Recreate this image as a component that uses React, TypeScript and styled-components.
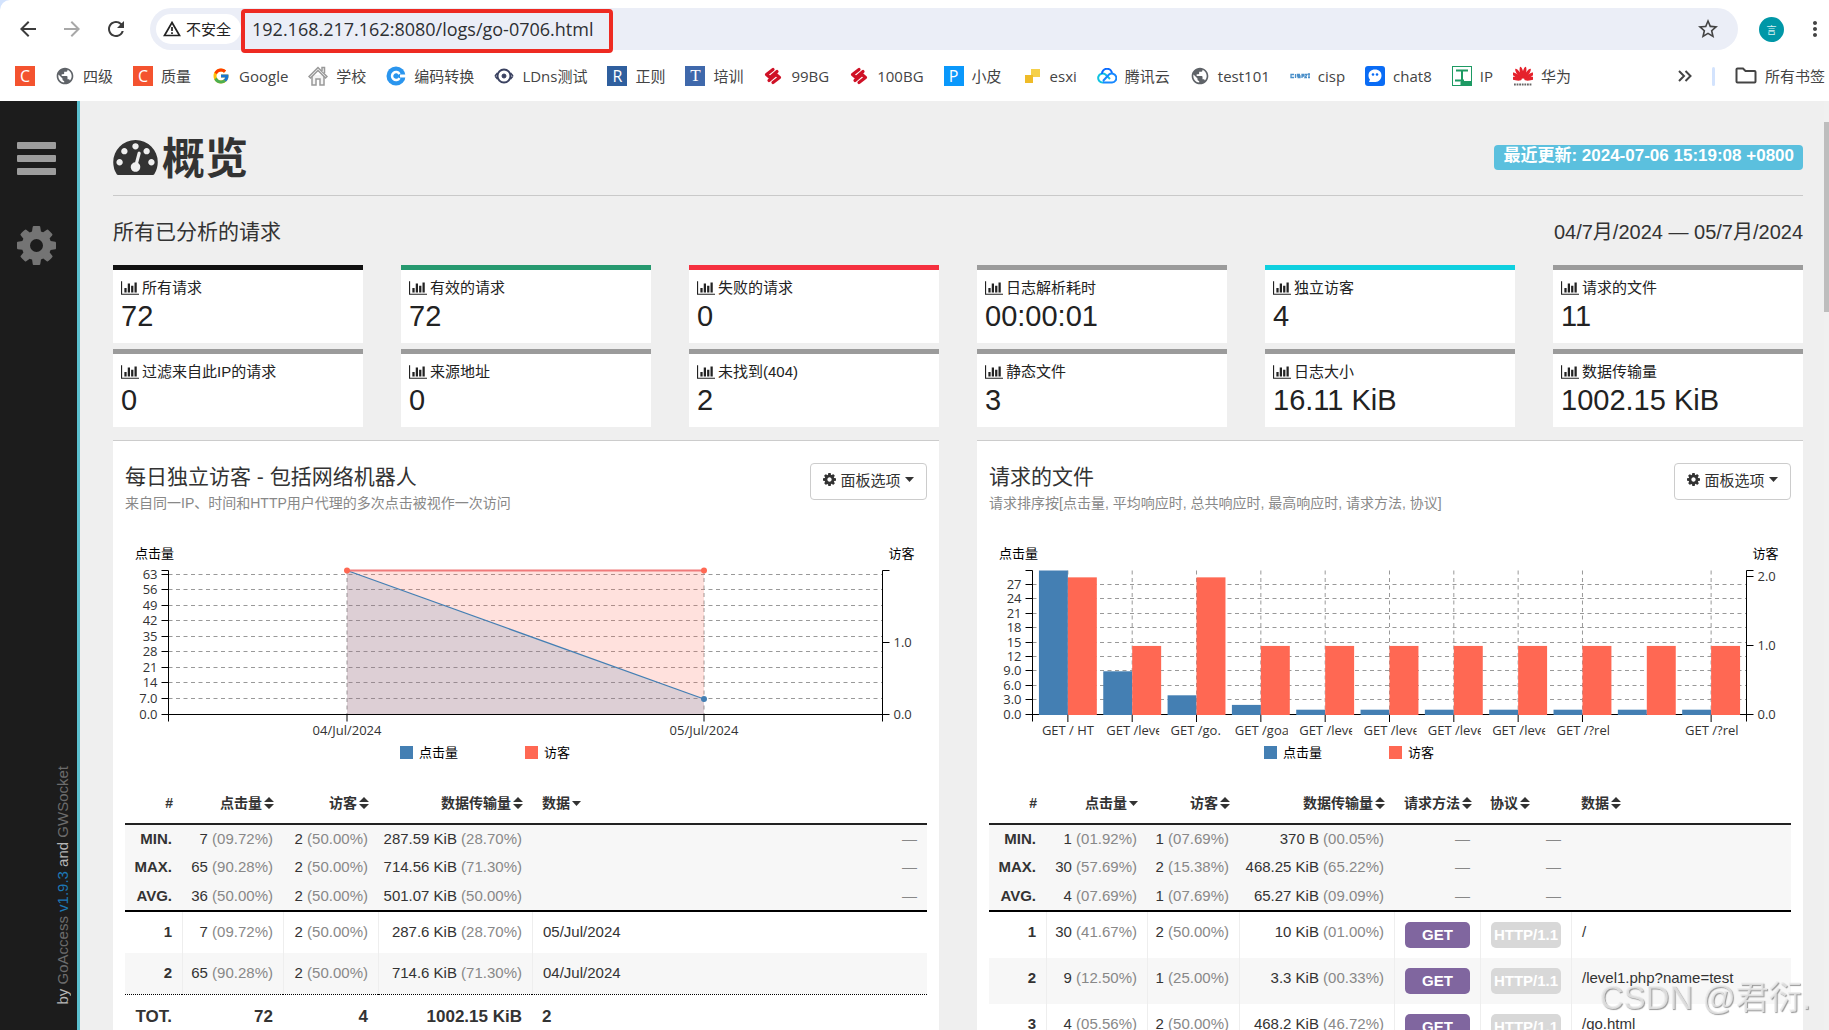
import React, { useEffect, useRef, useState } from "react";
import styled, { createGlobalStyle, css } from "styled-components";
import { FcGoogle } from "react-icons/fc";
import { MdArrowBack, MdArrowForward, MdRefresh, MdStarOutline, MdMoreVert, MdPublic } from "react-icons/md";

const sans = `"Liberation Sans", "Noto Sans CJK SC", sans-serif`;
const ui = `"Open Sans", "Noto Sans CJK SC", sans-serif`;

const GlobalStyle = createGlobalStyle`
  * { box-sizing: border-box; }
  body { margin: 0; background: #fff; font-family: ${sans}; color: #222; }
  button { font: inherit; color: inherit; background: none; border: 0; padding: 0; cursor: pointer; }
  a { color: inherit; text-decoration: none; }
  h1, h2, h3, p { margin: 0; font-weight: 400; }
  svg { display: block; flex: none; }
`;

/* ---------- glyphs ---------- */

const COG =
  "M1152 896q0-106-75-181t-181-75-181 75-75 181 75 181 181 75 181-75 75-181zm512-109v222q0 12-8 23t-20 13l-185 28q-19 54-39 91 35 50 107 138 10 12 10 25t-9 23q-27 37-99 108t-94 71q-12 0-26-9l-138-108q-44 23-91 38-16 136-29 186-7 28-36 28h-222q-14 0-24.5-8.5t-11.5-21.5l-28-184q-49-16-90-37l-141 107q-10 9-25 9-14 0-25-11-126-114-165-168-7-10-7-23 0-12 8-23 15-21 51-66.5t54-70.5q-27-50-41-99l-183-27q-13-2-21-12.5t-8-23.5v-222q0-12 8-23t19-13l186-28q14-46 39-92-40-57-107-138-10-12-10-24 0-10 9-23 26-36 98.5-107.5t94.5-71.5q13 0 26 10l138 107q44-23 91-38 16-136 29-186 7-28 36-28h222q14 0 24.5 8.5t11.5 21.5l28 184q49 16 90 37l142-107q9-9 24-9 13 0 25 10 129 119 165 170 7 8 7 22 0 12-8 23-15 21-51 66.5t-54 70.5q26 50 41 98l183 28q13 2 21 12.5t8 23.5z";
const GAUGE =
  "M384 1152q0-53-37.5-90.5t-90.5-37.5-90.5 37.5-37.5 90.5 37.5 90.5 90.5 37.5 90.5-37.5 37.5-90.5zm192-448q0-53-37.5-90.5t-90.5-37.5-90.5 37.5-37.5 90.5 37.5 90.5 90.5 37.5 90.5-37.5 37.5-90.5zm428 481l101-382q6-26-7.5-48.5t-38.5-29.5-48 6.5-30 39.5l-101 382q-60 5-107 43.5t-63 98.5q-20 77 20 146t117 89 146-20 89-117q16-60-6-117t-72-91zm660-33q0-53-37.5-90.5t-90.5-37.5-90.5 37.5-37.5 90.5 37.5 90.5 90.5 37.5 90.5-37.5 37.5-90.5zm-640-640q0-53-37.5-90.5t-90.5-37.5-90.5 37.5-37.5 90.5 37.5 90.5 90.5 37.5 90.5-37.5 37.5-90.5zm448 192q0-53-37.5-90.5t-90.5-37.5-90.5 37.5-37.5 90.5 37.5 90.5 90.5 37.5 90.5-37.5 37.5-90.5zm320 448q0 261-141 483-19 29-54 29h-1402q-35 0-54-29-141-221-141-483 0-182 71-348t191-286 286-191 348-71 348 71 286 191 191 286 71 348z";
const CHART =
  "M640 896v512h-256v-512h256zm384-512v1024h-256v-1024h256zm1024 1152v128h-2048v-1536h128v1408h1920zm-640-896v768h-256v-768h256zm384-384v1152h-256v-1152h256z";

const CogIcon = ({ size }: { size: number }) => (
  <svg width={size} height={size} viewBox="128 128 1536 1536" fill="currentColor"><path d={COG} /></svg>
);
const GaugeIcon = () => (
  <svg width="45" height="35" viewBox="0 256 1792 1408" fill="currentColor"><path d={GAUGE} /></svg>
);
const ChartIcon = () => (
  <svg width="18" height="14" viewBox="0 128 2048 1536" fill="currentColor"><path d={CHART} /></svg>
);
const BarsIcon = () => (
  <svg width="39" height="33" viewBox="0 0 39 33" fill="currentColor">
    <rect width="39" height="7" rx="1" /><rect y="13" width="39" height="7" rx="1" /><rect y="26" width="39" height="7" rx="1" />
  </svg>
);
const SortIcon = () => (
  <svg width="10" height="12" viewBox="0 0 10 12" fill="currentColor"><path d="M5 0l5 5H0zM0 7h10l-5 5z" /></svg>
);
const CaretIcon = () => (
  <svg width="9" height="5" viewBox="0 0 9 5" fill="currentColor"><path d="M0 0h9L4.500 5z" /></svg>
);

/* ---------- browser chrome ---------- */

const Window = styled.div`
  height: 100vh;
  display: flex;
  flex-direction: column;
  overflow: hidden;
  background: #d3e3fd;
`;
const Toolbar = styled.header`
  display: flex;
  align-items: center;
  height: 58px;
  padding: 0 2px 0 16px;
  background: #fff;
  border-top-left-radius: 10px;
`;
const NavButton = styled.button<{ $dim?: boolean }>`
  width: 24px;
  height: 24px;
  margin-right: 20px;
  color: ${(p) => (p.$dim ? "#a8a8a8" : "#3c3c3c")};
`;
const Omnibox = styled.div`
  flex: 1;
  display: flex;
  align-items: center;
  height: 42px;
  margin-left: 2px;
  padding: 0 18px 0 6px;
  border-radius: 21px;
  background: #ebeef7;
`;
const SecurityChip = styled.button`
  display: flex;
  align-items: center;
  gap: 5px;
  width: 85px;
  height: 30px;
  padding-left: 7px;
  border-radius: 15px;
  background: #fff;
  color: #222;
  font: 15px/30px ${ui};
  white-space: nowrap;
`;
const UrlBox = styled.label`
  position: relative;
  width: 372px;
  &::after {
    content: "";
    position: absolute;
    inset: 0 0 -4px;
    border: 4px solid #ee2a22;
    border-radius: 4px;
    pointer-events: none;
  }
`;
const UrlInput = styled.input`
  display: block;
  width: 100%;
  height: 40px;
  padding: 0 0 0 11px;
  border: 0;
  outline: 0;
  background: none;
  color: #2e3033;
  font: 18px ${ui};
`;
const StarButton = styled.button`
  margin-left: auto;
  color: #444;
`;
const Avatar = styled.button`
  width: 25px;
  height: 25px;
  margin: 0 19px 0 21px;
  border-radius: 50%;
  background: #0097a7;
  color: #d8f2f4;
  font-size: 10px;
`;
const MenuButton = styled.button`
  color: #444;
`;
const Bookmarks = styled.nav`
  display: flex;
  align-items: center;
  gap: 20px;
  height: 43px;
  padding: 0 4px 7px 15px;
  background: #fff;
  font: 15px/22px ${ui};
  color: #444;
  white-space: nowrap;
`;
const Bookmark = styled.a`
  display: flex;
  align-items: center;
  gap: 8px;
`;
const IconSlot = styled.span`
  display: flex;
  justify-content: center;
  width: 20px;
`;
const Tile = styled.span<{ $bg: string; $serif?: boolean }>`
  width: 20px;
  height: 20px;
  background: ${(p) => p.$bg};
  color: #fff;
  text-align: center;
  font: ${(p) => (p.$serif ? `17px/20px "Liberation Serif", serif` : `16px/20px ${ui}`)};
`;
const MoreMarks = styled.button`
  margin-left: auto;
`;
const Divider = styled.span`
  width: 3px;
  height: 19px;
  border-radius: 2px;
  background: #d3e3fd;
`;

const WarnIcon = () => (
  <svg width="18" height="16" viewBox="0 0 18 16" fill="none" stroke="#222" strokeWidth="1.700">
    <path d="M9 1.500L16.500 14.500H1.500z" /><path d="M9 6v4M9 11.300v1.700" />
  </svg>
);
const House = () => (
  <svg width="20" height="20" viewBox="0 0 20 20" fill="#f4f4f4" stroke="#999" strokeWidth="1.500">
    <path d="M4 9v10h4v-6h4v6h4V9" /><path d="M1 10.500L10 1.500l9 9-1.500 1.500L10 4.500 2.500 12z" /><path d="M14 5V1.500h2.500V7" />
  </svg>
);
const BlueC = () => (
  <svg width="20" height="20" viewBox="0 0 20 20">
    <circle cx="10" cy="10" r="9.500" fill="#2a95ee" /><path d="M13.500 8a4 4 0 1 0 0 4" fill="none" stroke="#fff" strokeWidth="2.500" /><path d="M14 8.500h6v3h-6z" fill="#fff" />
  </svg>
);
const Eye = () => (
  <svg width="20" height="18" viewBox="0 0 20 18" fill="none" stroke="#3a4160">
    <circle cx="10" cy="9" r="6.500" strokeWidth="2" /><path d="M1 9l2.500-3M1 9l2.500 3M19 9l-2.500-3M19 9l-2.500 3" strokeWidth="1.500" /><circle cx="10" cy="9" r="2" fill="#3a4160" />
  </svg>
);
const RedS = () => (
  <svg width="18" height="18" viewBox="0 0 18 18" fill="none" stroke="#cf1126" strokeWidth="3.200" strokeLinecap="round" strokeLinejoin="round">
    <path d="M9 2.500L2.500 7.500 6 10.500l7-6" /><path d="M9 15.500l6.500-5L12 7.500l-7 6" />
  </svg>
);
const Blocks = () => (
  <svg width="16" height="14" viewBox="0 0 16 14"><path d="M7 0h9v8H7z" fill="#f5d04a" /><path d="M1 6h8v8H1z" fill="#efbb28" /></svg>
);
const Cloud = () => (
  <svg width="20" height="16" viewBox="0 0 20 16" fill="none" strokeWidth="2">
    <path d="M6 14.500a4.500 4.500 0 1 1 2.500-8L13 11" stroke="#10c3e0" /><path d="M5 6a5 5 0 0 1 10-.500" stroke="#0a6cff" /><path d="M6 14.500h9a4.500 4.500 0 1 0-3-8L6 13" stroke="#1788ff" />
  </svg>
);
const CispMark = () => (
  <svg width="20" height="6" viewBox="0 0 20 6" stroke="#4a8fc9" fill="none" strokeWidth="1.300">
    <path d="M4 1.500H1v3h3M5.500 1v4M10 1.500H7.500v1.500H10v1.500H7.500M12 5V1.500h2V3h-2M15 1.500h2L15 4.500h2M18 1h2M19 1v4M18 4.500h2" />
  </svg>
);
const ChatMark = () => (
  <svg width="20" height="20" viewBox="0 0 20 20">
    <rect width="20" height="20" rx="3" fill="#0a6cf5" /><path d="M10 3.500c4 0 6.500 2.500 6.500 6s-2.500 6.500-6 6.500H4l1-2.500c-1-1-1.500-2.500-1.500-4 0-3.500 2.500-6 6.500-6z" fill="#fff" />
    <circle cx="8" cy="8.500" r="1.300" fill="#0a6cf5" /><circle cx="12" cy="8.500" r="1.300" fill="#0a6cf5" />
  </svg>
);
const ToolMark = () => (
  <svg width="20" height="20" viewBox="0 0 20 20" fill="none" stroke="#1d9a63">
    <rect x=".5" y=".5" width="19" height="19" /><path d="M4 4.500h12M10 4.500v10M3 14.500h9" strokeWidth="2" /><path d="M9 15.500h11v4H9z" fill="#1d9a63" />
  </svg>
);
const Huawei = () => (
  <svg width="20" height="20" viewBox="0 0 20 20">
    {[-80, -57, -34, -11, 11, 34, 57, 80].map((a) => (
      <ellipse key={a} cx="10" cy="6.500" rx="1.700" ry="6" fill="#e5222c" transform={`rotate(${a} 10 14)`} />
    ))}
    <path d="M1 18.500h18" stroke="#666" strokeWidth="2" strokeDasharray="1.800 .8" />
  </svg>
);
const Folder = () => (
  <svg width="22" height="18" viewBox="0 0 22 18" fill="none" stroke="#444" strokeWidth="2">
    <path d="M1.500 14.500v-12a1 1 0 0 1 1-1H8l2.500 2.500h9a1 1 0 0 1 1 1v9.500a1 1 0 0 1-1 1h-17a1 1 0 0 1-1-1z" />
  </svg>
);
const Chevrons = () => (
  <svg width="14" height="12" viewBox="0 0 14 12" fill="none" stroke="#444" strokeWidth="2"><path d="M1 1l5 5-5 5M7.500 1l5 5-5 5" /></svg>
);

const marks: [React.ReactNode, string][] = [
  [<Tile $bg="#f4532f">C</Tile>, ""],
  [<MdPublic size={20} color="#5f6368" />, "四级"],
  [<Tile $bg="#f4532f">C</Tile>, "质量"],
  [<FcGoogle size={18} />, "Google"],
  [<House />, "学校"],
  [<BlueC />, "编码转换"],
  [<Eye />, "LDns测试"],
  [<Tile $bg="#2f5f9e">R</Tile>, "正则"],
  [<Tile $bg="#3f68ab" $serif>T</Tile>, "培训"],
  [<RedS />, "99BG"],
  [<RedS />, "100BG"],
  [<Tile $bg="#0a98fb">P</Tile>, "小皮"],
  [<Blocks />, "esxi"],
  [<Cloud />, "腾讯云"],
  [<MdPublic size={20} color="#5f6368" />, "test101"],
  [<CispMark />, "cisp"],
  [<ChatMark />, "chat8"],
  [<ToolMark />, "IP"],
  [<Huawei />, "华为"],
];

/* ---------- report layout ---------- */

const Page = styled.div`
  flex: 1;
  min-height: 0;
  display: flex;
  background: #efefef;
`;
const Sidebar = styled.nav`
  display: flex;
  flex-direction: column;
  align-items: center;
  flex: none;
  width: 80px;
  padding: 41px 5px 26px 0;
  border-right: 3px solid #5bc0cf;
  background: #1c1c1c;
  color: #999;
`;
const SideButton = styled.button<{ $dim?: boolean }>`
  height: 33px;
  margin-bottom: 51px;
  color: ${(p) => (p.$dim ? "#747474" : "#9d9d9d")};
`;
const Credit = styled.p`
  margin-top: auto;
  align-self: flex-end;
  writing-mode: vertical-rl;
  transform: rotate(180deg);
  font-size: 15px;
  line-height: 18px;
  color: #b5b5b5;
  white-space: nowrap;
`;
const CreditLink = styled.a<{ $accent?: boolean }>`
  color: ${(p) => (p.$accent ? "#1c78b6" : "#6c6c6c")};
`;
const Main = styled.main`
  flex: 1;
  min-width: 0;
  padding: 0 21px 0 33px;
  overflow: hidden;
`;
const Rail = styled.div`
  flex: none;
  width: 5px;
  padding-top: 21px;
  background: #f0f0f0;
  &::before {
    content: "";
    display: block;
    height: 190px;
    background: #bdbdbd;
  }
`;
const TitleRow = styled.div`
  display: flex;
  justify-content: space-between;
  align-items: center;
  height: 95px;
  padding-top: 19px;
  border-bottom: 1px solid #c9c9c9;
`;
const Title = styled.h1`
  display: flex;
  align-items: center;
  gap: 4px;
  color: #333;
  font-size: 43px;
  line-height: 54px;
  font-weight: 700;
`;
const TitleText = styled.span`
  padding-top: 3px;
`;
const Updated = styled.span`
  padding: 0 9px 4px;
  border-radius: 4px;
  background: #5bc0de;
  color: #fff;
  font-size: 17px;
  line-height: 21px;
  font-weight: 700;
`;
const RangeRow = styled.div`
  display: flex;
  justify-content: space-between;
  align-items: center;
  height: 69px;
  padding-top: 3px;
  color: #333;
`;
const Analyzed = styled.h2`
  font-size: 21px;
  line-height: 28px;
`;
const DateRange = styled.p`
  font-size: 20px;
  line-height: 28px;
`;
const Cards = styled.section`
  display: grid;
  grid-template-columns: repeat(6, 1fr);
  gap: 6px 38px;
  margin-bottom: 13px;
`;
const Card = styled.div<{ $bar: string }>`
  padding: 7px 8px 10px;
  border-top: 5px solid ${(p) => p.$bar};
  background: #fff;
`;
const CardLabel = styled.div`
  display: flex;
  align-items: center;
  gap: 3px;
  font-size: 15px;
  line-height: 22px;
`;
const CardValue = styled.div`
  font-size: 29px;
  line-height: 34px;
`;
const Panels = styled.div`
  display: grid;
  grid-template-columns: repeat(2, minmax(0, 1fr));
  gap: 38px;
`;
const Panel = styled.section`
  padding: 22px 12px 40px;
  border-top: 1px solid #ccc;
  background: #fff;
`;
const PanelHead = styled.div`
  display: flex;
  justify-content: space-between;
  align-items: flex-start;
  margin-bottom: 27px;
`;
const PanelTitle = styled.h3`
  color: #333;
  font-size: 21px;
  line-height: 28px;
`;
const PanelNote = styled.p`
  margin-top: 2px;
  color: #888;
  font-size: 14px;
  line-height: 20px;
`;
const OptionsButton = styled.button`
  display: flex;
  align-items: center;
  justify-content: center;
  gap: 4px;
  width: 117px;
  height: 37px;
  padding-bottom: 4px;
  border: 1px solid #ccc;
  border-radius: 4px;
  background: #fff;
  color: #333;
  font-size: 15px;
`;

/* ---------- charts ---------- */

const Plot = styled.svg`
  width: 100%;
  height: 229px;
  font: 13px ${ui};
  fill: #333;
  .caption { fill: #000; }
  .axis { stroke: #000; fill: none; }
  .grid { stroke: #999; stroke-dasharray: 4 3.5; }
`;
const BLUE = "#447fb3";
const RED = "#ff6853";
const TOP = 30.5;
const BOTTOM = 174.5;
const LEFT = 43.5;

function useWidth() {
  const ref = useRef<SVGSVGElement>(null);
  const [width, setWidth] = useState(802);
  useEffect(() => {
    const node = ref.current;
    if (!node) return;
    const watch = new ResizeObserver(() => setWidth(node.getBoundingClientRect().width));
    watch.observe(node);
    return () => watch.disconnect();
  }, []);
  return { ref, width };
}

const yAt = (v: number, max: number) => BOTTOM - (v / max) * (BOTTOM - TOP);
const tickText = (v: number) => (v < 10 ? v.toFixed(1) : String(v));

interface FrameProps {
  right: number;
  leftTicks: number[];
  leftMax: number;
  rightTicks: number[];
  rightMax: number;
}

const GridLines = ({ right, leftTicks, leftMax }: FrameProps) => (
  <g className="grid">
    {leftTicks.filter((t) => t > 0).map((t) => {
      const y = Math.round(yAt(t, leftMax)) - 0.5;
      return <line key={t} x1={LEFT} x2={right} y1={y} y2={y} />;
    })}
  </g>
);

const Axes = ({ right, leftTicks, leftMax, rightTicks, rightMax }: FrameProps) => (
  <>
    <path className="axis" d={`M${LEFT - 7} ${TOP}H${LEFT}V${BOTTOM + 7}M${right + 7} ${TOP}H${right}V${BOTTOM + 7}`} />
    <g textAnchor="end">
      {leftTicks.map((t) => {
        const y = yAt(t, leftMax);
        return (
          <g key={t}>
            <path className="axis" d={`M${LEFT - 7} ${Math.round(y) - 0.5}h7`} />
            <text x={LEFT - 11} y={y + 4}>{tickText(t)}</text>
          </g>
        );
      })}
    </g>
    {rightTicks.map((t) => {
      const y = yAt(t, rightMax);
      return (
        <g key={t}>
          <path className="axis" d={`M${right} ${Math.round(y) - 0.5}h7`} />
          <text x={right + 11} y={y + 4}>{tickText(t)}</text>
        </g>
      );
    })}
    <text className="caption" x="10" y="18">点击量</text>
    <text className="caption" x={right + 6} y="18">访客</text>
  </>
);

const Legend = ({ mid }: { mid: number }) => (
  <g className="caption">
    <rect x={mid - 126} y="206" width="13" height="13" fill={BLUE} />
    <text x={mid - 107} y="217">点击量</text>
    <rect x={mid - 1} y="206" width="13" height="13" fill={RED} />
    <text x={mid + 18} y="217">访客</text>
  </g>
);

const VisitorsChart = () => {
  const { ref, width } = useWidth();
  const right = width - 44.5;
  const frame: FrameProps = {
    right, leftTicks: [0, 7, 14, 21, 28, 35, 42, 49, 56, 63], leftMax: 65, rightTicks: [0, 1], rightMax: 2,
  };
  const a = LEFT + (right - LEFT) / 4;
  const b = LEFT + ((right - LEFT) * 3) / 4;
  const low = yAt(7, 65);
  return (
    <Plot ref={ref} role="img" aria-label="每日独立访客">
      <GridLines {...frame} />
      <g className="grid">
        <line x1={a} x2={a} y1={TOP} y2={BOTTOM} />
        <line x1={b} x2={b} y1={TOP} y2={BOTTOM} />
      </g>
      <path d={`M${a} ${TOP}H${b}V${BOTTOM}H${a}z`} fill={RED} opacity="0.200" />
      <path d={`M${a} ${TOP}L${b} ${low}V${BOTTOM}H${a}z`} fill={BLUE} opacity="0.180" />
      <path d={`M${a} ${TOP}L${b} ${low}`} stroke={BLUE} strokeWidth="1.300" />
      <path d={`M${a} ${TOP}H${b}`} stroke="#f07a7a" strokeWidth="2" />
      <circle cx={b} cy={low} r="3" fill={BLUE} />
      <circle cx={a} cy={TOP} r="3" fill={RED} />
      <circle cx={b} cy={TOP} r="3" fill={RED} />
      <Axes {...frame} />
      <path className="axis" d={`M${LEFT} ${BOTTOM}H${right}M${a} ${BOTTOM}v7M${b} ${BOTTOM}v7`} />
      <g textAnchor="middle">
        <text x={a} y="195">04/Jul/2024</text>
        <text x={b} y="195">05/Jul/2024</text>
      </g>
      <Legend mid={width / 2} />
    </Plot>
  );
};

const requests: [string, number, number][] = [
  ["GET / HT", 30, 2], ["GET /leve", 9, 1], ["GET /go.", 4, 2], ["GET /goa", 2, 1], ["GET /leve", 1, 1], ["GET /leve", 1, 1],
  ["GET /leve", 1, 1], ["GET /leve", 1, 1], ["GET /?rel", 1, 1], ["", 1, 1], ["GET /?rel", 1, 1],
];

const RequestsChart = () => {
  const { ref, width } = useWidth();
  const right = width - 44.5;
  const frame: FrameProps = {
    right, leftTicks: [0, 3, 6, 9, 12, 15, 18, 21, 24, 27], leftMax: 30, rightTicks: [0, 1, 2], rightMax: 2.1,
  };
  const step = (right - LEFT) / (requests.length + 0.1);
  const bar = step * 0.45;
  const center = (i: number) => LEFT + step * 0.1 + bar + step * i;
  return (
    <Plot ref={ref} role="img" aria-label="请求的文件">
      <GridLines {...frame} />
      <path className="axis" d={`M${LEFT} ${BOTTOM}H${right}`} />
      {requests.map(([name, hits, visitors], i) => {
        const x = center(i);
        const h = yAt(hits, 30);
        const v = yAt(visitors, 2.1);
        return (
          <g key={i}>
            {name && <line className="grid" x1={x} x2={x} y1={TOP} y2={BOTTOM} />}
            <rect x={x - bar} y={h} width={bar} height={BOTTOM - h + 0.5} fill={BLUE} />
            <rect x={x} y={v} width={bar} height={BOTTOM - v + 0.5} fill={RED} />
            {name && <path className="axis" d={`M${x} ${BOTTOM + 0.5}v7`} />}
            <svg x={x - 26} y="180" width="53" height="22" overflow="hidden"><text x="0" y="15">{name}</text></svg>
          </g>
        );
      })}
      <Axes {...frame} />
      <Legend mid={width / 2} />
    </Plot>
  );
};

/* ---------- tables ---------- */

const Table = styled.table`
  width: 100%;
  table-layout: fixed;
  border-collapse: separate;
  border-spacing: 0;
  color: #333;
  font-size: 15px;
  line-height: 20px;
  white-space: nowrap;
`;
const Col = styled.col<{ $w?: number }>`
  ${(p) => p.$w && css`width: ${p.$w}px;`}
`;
const HeadCell = styled.th<{ $left?: boolean }>`
  padding: 24px 9px 10px 10px;
  border-bottom: 2px solid #222;
  text-align: ${(p) => (p.$left ? "left" : "right")};
  font-size: 14px;
`;
const SortButton = styled.button`
  display: inline-flex;
  align-items: center;
  gap: 2px;
  height: 20px;
  font-weight: 700;
`;
const Meta = styled.tbody`
  background: #f7f7f7;
  th, td { padding: 4px 10px 4px 4px; text-align: right; }
  tr:last-child > * { padding-top: 5px; border-bottom: 2px solid #000; }
`;
const Body = styled.tbody`
  th, td { height: 41px; padding: 10px 10px 10px 4px; text-align: right; vertical-align: top; }
  tr > * + * { border-left: 1px solid #eee; }
  tr > td:last-child { padding-left: 10px; text-align: left; }
  tr:nth-child(even) { background: #f7f7f7; }
`;
const Total = styled.tfoot`
  font-size: 17px;
  th, td { padding: 12px 10px; border-top: 1px dotted #000; text-align: right; font-weight: 700; }
  td:last-child { text-align: left; }
`;
const BadgeCell = styled.td`
  && { padding-left: 10px; }
`;
const Muted = styled.span`
  color: #888;
`;
const Badge = styled.span<{ $bg: string }>`
  display: block;
  height: 26px;
  border-radius: 5px;
  background: ${(p) => p.$bg};
  color: #fff;
  text-align: center;
  font-weight: 700;
  line-height: 26px;
`;

const Figure = ({ v }: { v: string }) => {
  const [n, pct] = v.split("|");
  if (n === "—") return <Muted>—</Muted>;
  return pct ? <>{n} <Muted>({pct}%)</Muted></> : <>{n}</>;
};

interface Head { label: string; left?: boolean; sorted?: boolean }
const TableHead = ({ heads }: { heads: Head[] }) => (
  <thead>
    <tr>
      <HeadCell scope="col">#</HeadCell>
      {heads.map((h) => (
        <HeadCell key={h.label} scope="col" $left={h.left}>
          <SortButton type="button">{h.label}{h.sorted ? <CaretIcon /> : <SortIcon />}</SortButton>
        </HeadCell>
      ))}
    </tr>
  </thead>
);
const MetaRows = ({ rows }: { rows: string[][] }) => (
  <Meta>
    {rows.map(([name, ...cells]) => (
      <tr key={name}>
        <th scope="row">{name}</th>
        {cells.map((c, i) => <td key={i}><Figure v={c} /></td>)}
      </tr>
    ))}
  </Meta>
);

const VisitorsTable = () => (
  <Table>
    <colgroup><Col $w={57} /><Col $w={101} /><Col $w={95} /><Col $w={154} /><Col /></colgroup>
    <TableHead heads={[{ label: "点击量" }, { label: "访客" }, { label: "数据传输量" }, { label: "数据", left: true, sorted: true }]} />
    <MetaRows rows={[
      ["MIN.", "7|09.72", "2|50.00", "287.59 KiB|28.70", "—"],
      ["MAX.", "65|90.28", "2|50.00", "714.56 KiB|71.30", "—"],
      ["AVG.", "36|50.00", "2|50.00", "501.07 KiB|50.00", "—"],
    ]} />
    <Body>
      {[
        ["1", "7|09.72", "2|50.00", "287.6 KiB|28.70", "05/Jul/2024"],
        ["2", "65|90.28", "2|50.00", "714.6 KiB|71.30", "04/Jul/2024"],
      ].map(([n, ...cells]) => (
        <tr key={n}>
          <th scope="row">{n}</th>
          {cells.map((c, i) => <td key={i}><Figure v={c} /></td>)}
        </tr>
      ))}
    </Body>
    <Total>
      <tr><th scope="row">TOT.</th><td>72</td><td>4</td><td>1002.15 KiB</td><td>2</td></tr>
    </Total>
  </Table>
);

const RequestsTable = () => (
  <Table>
    <colgroup><Col $w={57} /><Col $w={101} /><Col $w={92} /><Col $w={155} /><Col $w={86} /><Col $w={91} /><Col /></colgroup>
    <TableHead heads={[
      { label: "点击量", sorted: true }, { label: "访客" }, { label: "数据传输量" },
      { label: "请求方法", left: true }, { label: "协议", left: true }, { label: "数据", left: true },
    ]} />
    <MetaRows rows={[
      ["MIN.", "1|01.92", "1|07.69", "370 B|00.05", "—", "—", ""],
      ["MAX.", "30|57.69", "2|15.38", "468.25 KiB|65.22", "—", "—", ""],
      ["AVG.", "4|07.69", "1|07.69", "65.27 KiB|09.09", "—", "—", ""],
    ]} />
    <Body>
      {[
        ["1", "30|41.67", "2|50.00", "10 KiB|01.00", "/"],
        ["2", "9|12.50", "1|25.00", "3.3 KiB|00.33", "/level1.php?name=test"],
        ["3", "4|05.56", "2|50.00", "468.2 KiB|46.72", "/go.html"],
      ].map(([n, hits, visitors, bytes, path]) => (
        <tr key={n}>
          <th scope="row">{n}</th>
          <td><Figure v={hits} /></td>
          <td><Figure v={visitors} /></td>
          <td><Figure v={bytes} /></td>
          <BadgeCell><Badge $bg="#80669f">GET</Badge></BadgeCell>
          <BadgeCell><Badge $bg="#d8d8d8">HTTP/1.1</Badge></BadgeCell>
          <td>{path}</td>
        </tr>
      ))}
    </Body>
  </Table>
);

const Watermark = styled.div`
  position: fixed;
  right: 18px;
  bottom: 8px;
  color: rgba(235, 235, 235, 0.8);
  font-size: 33px;
  line-height: 48px;
  text-shadow: 1px 1px 1px #999;
  pointer-events: none;
`;

const stats: [string, string, string][] = [
  ["所有请求", "72", "#111"], ["有效的请求", "72", "#26996f"], ["失败的请求", "0", "#f5303f"],
  ["日志解析耗时", "00:00:01", "#9b9b9b"], ["独立访客", "4", "#0fd0df"], ["请求的文件", "11", "#9b9b9b"],
  ["过滤来自此IP的请求", "0", "#9b9b9b"], ["来源地址", "0", "#9b9b9b"], ["未找到(404)", "2", "#9b9b9b"],
  ["静态文件", "3", "#9b9b9b"], ["日志大小", "16.11 KiB", "#9b9b9b"], ["数据传输量", "1002.15 KiB", "#9b9b9b"],
];

const PanelHeader = ({ title, note }: { title: string; note: string }) => (
  <PanelHead>
    <div>
      <PanelTitle>{title}</PanelTitle>
      <PanelNote>{note}</PanelNote>
    </div>
    <OptionsButton type="button"><CogIcon size={13} />面板选项<CaretIcon /></OptionsButton>
  </PanelHead>
);

export default function App() {
  return (
    <Window>
      <GlobalStyle />
      <Toolbar>
        <NavButton aria-label="后退"><MdArrowBack size={24} /></NavButton>
        <NavButton aria-label="前进" $dim><MdArrowForward size={24} /></NavButton>
        <NavButton aria-label="刷新"><MdRefresh size={24} /></NavButton>
        <Omnibox>
          <SecurityChip type="button"><WarnIcon />不安全</SecurityChip>
          <UrlBox>
            <UrlInput aria-label="网址" defaultValue="192.168.217.162:8080/logs/go-0706.html" />
          </UrlBox>
          <StarButton aria-label="收藏"><MdStarOutline size={24} /></StarButton>
        </Omnibox>
        <Avatar aria-label="账户">言</Avatar>
        <MenuButton aria-label="菜单"><MdMoreVert size={24} /></MenuButton>
      </Toolbar>
      <Bookmarks>
        {marks.map(([icon, label], i) => (
          <Bookmark key={i} href="#">
            <IconSlot>{icon}</IconSlot>
            {label && <span>{label}</span>}
          </Bookmark>
        ))}
        <MoreMarks aria-label="更多书签"><Chevrons /></MoreMarks>
        <Divider />
        <Bookmark href="#"><Folder />所有书签</Bookmark>
      </Bookmarks>
      <Page>
        <Sidebar>
          <SideButton aria-label="导航"><BarsIcon /></SideButton>
          <SideButton aria-label="设置" $dim><CogIcon size={39} /></SideButton>
          <Credit>
            by <CreditLink href="#">GoAccess</CreditLink> <CreditLink href="#" $accent>v1.9.3</CreditLink> and{" "}
            <CreditLink href="#">GWSocket</CreditLink>
          </Credit>
        </Sidebar>
        <Main>
          <TitleRow>
            <Title><GaugeIcon /><TitleText>概览</TitleText></Title>
            <Updated>最近更新: 2024-07-06 15:19:08 +0800</Updated>
          </TitleRow>
          <RangeRow>
            <Analyzed>所有已分析的请求</Analyzed>
            <DateRange>04/7月/2024 — 05/7月/2024</DateRange>
          </RangeRow>
          <Cards>
            {stats.map(([label, value, bar]) => (
              <Card key={label} $bar={bar}>
                <CardLabel><ChartIcon />{label}</CardLabel>
                <CardValue>{value}</CardValue>
              </Card>
            ))}
          </Cards>
          <Panels>
            <Panel>
              <PanelHeader title="每日独立访客 - 包括网络机器人" note="来自同一IP、时间和HTTP用户代理的多次点击被视作一次访问" />
              <VisitorsChart />
              <VisitorsTable />
            </Panel>
            <Panel>
              <PanelHeader title="请求的文件" note="请求排序按[点击量, 平均响应时, 总共响应时, 最高响应时, 请求方法, 协议]" />
              <RequestsChart />
              <RequestsTable />
            </Panel>
          </Panels>
        </Main>
        <Rail />
      </Page>
      <Watermark>CSDN @君衍.</Watermark>
    </Window>
  );
}
